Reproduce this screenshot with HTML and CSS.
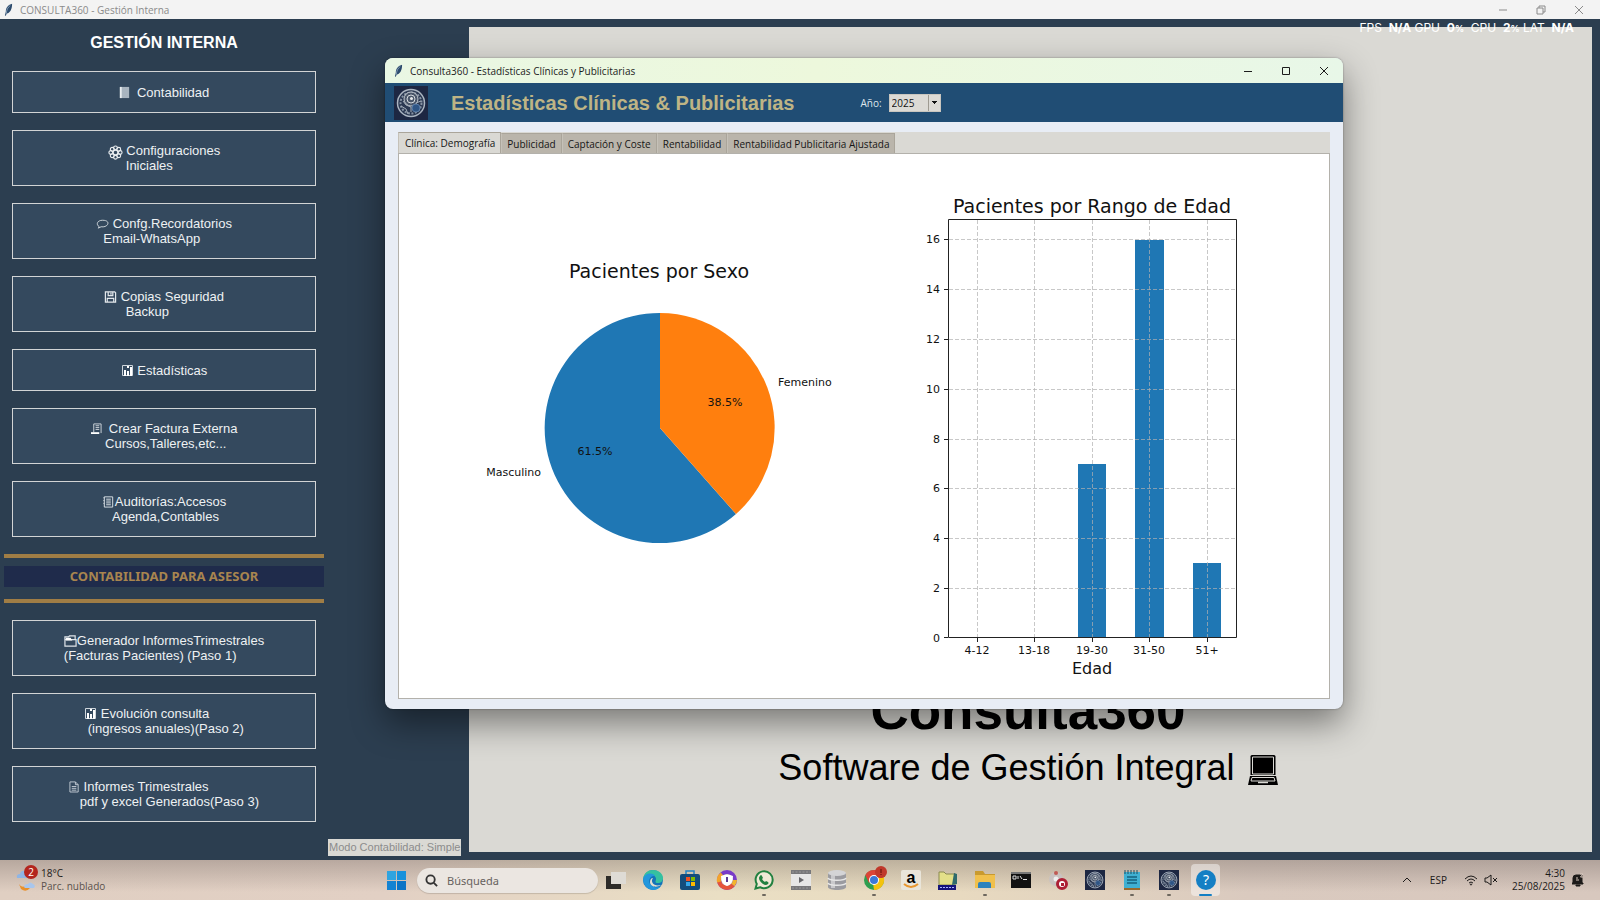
FILE: index.html
```html
<!DOCTYPE html>
<html lang="es">
<head>
<meta charset="UTF-8">
<meta name="viewport" content="width=device-width, initial-scale=1.0">
<title>CONSULTA360 - Gestión Interna</title>
<link rel="stylesheet" href="styles.css">
</head>
<body>

<!-- Iconos compartidos -->
<svg class="defs" aria-hidden="true">
    <symbol id="feather" viewBox="0 0 10 14">
        <path d="M9 0C5 1 2 4 2 9l-1 4 1 .5L3 11c4-1 6-5 6-11z" fill="#2b4a6d"/>
        <path d="M7 2C4 4 3 7 2.500 11" stroke="#9fb6cc" stroke-width=".8" fill="none"/>
    </symbol>
    <symbol id="brand" viewBox="0 0 34 34">
        <rect width="34" height="34" fill="#1d2742"/>
        <circle cx="17" cy="17" r="13.500" fill="#2b3852" stroke="#aab4c0" stroke-width="1.500"/>
        <circle cx="17" cy="17" r="10.500" fill="none" stroke="#8793a3" stroke-width="2" stroke-dasharray="2 1.500"/>
        <circle cx="17" cy="13" r="7" fill="#4a566a" stroke="#c3c9d0"/>
        <circle cx="17" cy="13" r="4" fill="none" stroke="#d5d9dd"/>
        <circle cx="17.500" cy="12.500" r="1.500" fill="#e5e7ea"/>
        <circle cx="22" cy="22" r="4" fill="#2f5585" stroke="#587ba6"/>
        <path d="M7 20l5 3 2 5M9 15l3 4 5 2v5M22 17l5-2" stroke="#a3adb9" fill="none"/>
    </symbol>
    <symbol id="chart" viewBox="0 0 13 13">
        <path d="M1.500 1.500h10v10h-10z" fill="none" stroke="#cfd6dc"/>
        <path d="M3 6h2v6H3zM6 7h2v5H6zM9 3h2v9H9zM6 2h2v2H6z" fill="#fff"/>
    </symbol>
</svg>

<header class="titlebar">
    <svg class="feather"><use href="#feather"/></svg>
    <span>CONSULTA360 - Gestión Interna</span>
    <div class="win-controls">
        <button aria-label="Minimizar"><svg viewBox="0 0 10 10"><path d="M1 5h8"/></svg></button>
        <button aria-label="Restaurar"><svg viewBox="0 0 10 10"><path d="M1 3h6v6H1zM3 3V1h6v6H7"/></svg></button>
        <button aria-label="Cerrar"><svg viewBox="0 0 10 10"><path d="M1 1l8 8M9 1L1 9"/></svg></button>
    </div>
</header>

<main class="desktop">
    <nav class="sidebar">
        <h1>GESTIÓN INTERNA</h1>
        <button class="menu-btn"><span><svg viewBox="0 0 10 14" class="narrow"><path d="M0 1h10v12H0z" fill="#a9b5c0"/><path d="M0 1h2v12H0z" fill="#e8ecef"/></svg>  Contabilidad</span></button>
        <button class="menu-btn"><span><svg viewBox="0 0 16 16" class="wide"><g fill="none" stroke="#e8ecef" stroke-width="1.200"><circle cx="8" cy="8" r="2.500"/><circle cx="8" cy="3" r="2"/><circle cx="8" cy="13" r="2"/><circle cx="3" cy="8" r="2"/><circle cx="13" cy="8" r="2"/><circle cx="4.500" cy="4.500" r="2"/><circle cx="11.500" cy="4.500" r="2"/><circle cx="4.500" cy="11.500" r="2"/><circle cx="11.500" cy="11.500" r="2"/></g></svg> Configuraciones
     Iniciales</span></button>
        <button class="menu-btn"><span><svg viewBox="0 0 13 14"><path d="M3 10.500C-1 8 1 3.500 6.500 3.500S13 6 12 8s-4 3-7 2.500L2 12z" fill="none" stroke="#d5dbe0"/></svg> Confg.Recordatorios
  Email-WhatsApp</span></button>
        <button class="menu-btn"><span><svg viewBox="0 0 13 14"><path d="M1 2h10l1 1v10H1zM4 2v4h5V2M3 13V9h7v4M7 3v2" fill="none" stroke="#e3e8ec" stroke-width="1.300"/></svg> Copias Seguridad
      Backup</span></button>
        <button class="menu-btn"><span><svg><use href="#chart"/></svg> Estadísticas</span></button>
        <button class="menu-btn"><span><svg viewBox="0 0 12 14" class="narrow"><path d="M3 11V2h8v10M5 4h4M5 6h4M5 8h4" fill="none" stroke="#d5dbe0"/><path d="M0 11h9v2H0z" fill="#fff"/></svg>  Crear Factura Externa
    Cursos,Talleres,etc...</span></button>
        <button class="menu-btn"><span><svg viewBox="0 0 13 14"><path d="M2 2h9v11H2zM4 4.500h5M4 6.500h5M4 8.500h5M4 10.500h5M1 3h1M1 6h1M1 9h1" fill="none" stroke="#dfe5ea"/></svg>Auditorías:Accesos
   Agenda,Contables</span></button>

        <h2 class="section">CONTABILIDAD PARA ASESOR</h2>

        <button class="menu-btn"><span><svg viewBox="0 0 14 14"><path d="M1 6h12v7H1zM1 6V3h4l1-1h6v4" fill="none" stroke="#dfe5ea" stroke-width="1.300"/><path d="M2 4h5l2 3H2z" fill="#fff"/></svg>Generador InformesTrimestrales
(Facturas Pacientes) (Paso 1)</span></button>
        <button class="menu-btn"><span><svg><use href="#chart"/></svg> Evolución consulta
 (ingresos anuales)(Paso 2)</span></button>
        <button class="menu-btn"><span><svg viewBox="0 0 12 14" class="narrow"><path d="M1 2h6l3 3v8H1zM7 2v3h3M3 7h5M3 9h5M3 11h5" fill="none" stroke="#c5cdd5"/></svg> Informes Trimestrales
   pdf y excel Generados(Paso 3)</span></button>
    </nav>

    <p class="mode">Modo Contabilidad: Simple</p>

    <section class="welcome">
        <p class="brand-name">Consulta360</p>
        <p class="slogan">Software de Gestión Integral
            <svg viewBox="0 0 30 32" aria-hidden="true"><path d="M4 1h22q1.500 0 1.500 1.500V21H2.500V2.500Q2.500 1 4 1z"/><path d="M4.500 3h21v17h-21z" fill="none" stroke="#dad9d4"/><path d="M2 22h26l2 9H0z"/><path d="M4 23.500h22l1 3.500H3z" fill="none" stroke="#dad9d4"/><path d="M10 28.500h10" stroke="#dad9d4" stroke-width="1.500"/></svg>
        </p>
    </section>

    <p class="perf">FPS&nbsp; <b>N/A</b> GPU&nbsp; <b>0<small>%</small></b>&nbsp; CPU&nbsp; <b>2<small>%</small></b> LAT&nbsp; <b>N/A</b></p>

    <section class="dialog">
        <header class="dialog-title">
            <svg class="feather"><use href="#feather"/></svg>
            <span>Consulta360 - Estadísticas Clínicas y Publicitarias</span>
            <div class="win-controls">
                <button aria-label="Minimizar"><svg viewBox="0 0 10 10"><path d="M1 5.500h8"/></svg></button>
                <button aria-label="Maximizar"><svg viewBox="0 0 10 10"><path d="M1.500 1.500h7v7h-7z"/></svg></button>
                <button aria-label="Cerrar"><svg viewBox="0 0 10 10"><path d="M1 1l8 8M9 1L1 9"/></svg></button>
            </div>
        </header>
        <div class="dialog-head">
            <svg class="logo"><use href="#brand"/></svg>
            <h2>Estadísticas Clínicas &amp; Publicitarias</h2>
            <label for="year">Año:</label>
            <span class="combo"><select id="year"><option>2025</option></select></span>
        </div>
        <div class="dialog-body">
            <div class="tabs" role="tablist">
                <button role="tab" class="active" aria-selected="true">Clínica: Demografía</button>
                <button role="tab">Publicidad</button>
                <button role="tab">Captación y Coste</button>
                <button role="tab">Rentabilidad</button>
                <button role="tab">Rentabilidad Publicitaria Ajustada</button>
            </div>
            <div class="figure">
                <svg viewBox="0 0 930 544" role="img" aria-label="Pacientes por sexo y por rango de edad">
                    <!-- Sexo -->
                    <text class="chart-title" x="260" y="124">Pacientes por Sexo</text>
                    <path d="M261 274V159A115 115 0 1 0 337 360z" fill="#1f77b4"/>
                    <path d="M261 274V159A115 115 0 0 1 337 360z" fill="#ff7f0e"/>
                    <text x="326" y="252">38.5%</text>
                    <text x="196" y="301">61.5%</text>
                    <text class="start" x="379" y="232">Femenino</text>
                    <text class="end" x="142" y="322">Masculino</text>

                    <!-- Edad -->
                    <text class="chart-title" x="693" y="59">Pacientes por Rango de Edad</text>
                    <g fill="#1f77b4">
                        <rect x="679" y="310" width="28" height="174"/>
                        <rect x="736" y="86" width="29" height="398"/>
                        <rect x="794" y="409" width="28" height="75"/>
                    </g>
                    <path class="grid" d="M578.500 484V66M635.500 484V66M693.500 484V66M750.500 484V66M808.500 484V66"/>
                    <path class="grid" d="M550 434.500h288M550 384.500h288M550 334.500h288M550 285.500h288M550 235.500h288M550 185.500h288M550 135.500h288M550 85.500h288"/>
                    <path class="axis" d="M549.500 65.500h288v418h-288z"/>
                    <path class="axis" d="M578.500 484v4M635.500 484v4M693.500 484v4M750.500 484v4M808.500 484v4M549 483.500h-4M549 434.500h-4M549 384.500h-4M549 334.500h-4M549 285.500h-4M549 235.500h-4M549 185.500h-4M549 135.500h-4M549 85.500h-4"/>
                    <g class="end">
                        <text x="541" y="488">0</text>
                        <text x="541" y="438">2</text>
                        <text x="541" y="388">4</text>
                        <text x="541" y="338">6</text>
                        <text x="541" y="289">8</text>
                        <text x="541" y="239">10</text>
                        <text x="541" y="189">12</text>
                        <text x="541" y="139">14</text>
                        <text x="541" y="89">16</text>
                    </g>
                    <text x="578" y="500">4-12</text>
                    <text x="635" y="500">13-18</text>
                    <text x="693" y="500">19-30</text>
                    <text x="750" y="500">31-50</text>
                    <text x="808" y="500">51+</text>
                    <text class="axis-title" x="693" y="520">Edad</text>
                </svg>
            </div>
        </div>
    </section>
</main>

<footer class="taskbar">
    <div class="weather">
        <svg viewBox="0 0 22 26">
            <path d="M1 11q-1-4 3-4 1-4 5-3l3 7z" fill="#8fb5e4"/>
            <path d="M3 17q3 5 8 1l3 3q-4 5-9 1z" fill="#e8912c"/>
            <path d="M8 20q0-3 4-3 2-3 5 0 3 1 1 4H9z" fill="#a9c6ec"/>
            <circle cx="15" cy="5" r="7" fill="#b3261e"/>
            <text x="15" y="9">2</text>
        </svg>
        <div>
            <p>18°C</p>
            <p class="muted">Parc. nublado</p>
        </div>
    </div>

    <div class="center">
        <button class="app" aria-label="Inicio"><svg viewBox="0 0 20 20"><path d="M0 0h9.500v9.500H0z" fill="#2fa4e0"/><path d="M10.500 0H20v9.500h-9.500z" fill="#1791dc"/><path d="M0 10.500h9.500V20H0z" fill="#1583d2"/><path d="M10.500 10.500H20V20h-9.500z" fill="#0b74c6"/></svg></button>
        <label class="search">
            <svg viewBox="0 0 14 14"><circle cx="6" cy="6" r="4.500"/><path d="M9.500 9.500L13 13"/></svg>
            <input type="text" placeholder="Búsqueda" aria-label="Búsqueda">
        </label>
        <div class="apps">
            <button class="app" aria-label="Vista de tareas"><svg viewBox="0 0 20 20"><path d="M0 6h15v13H0z" fill="#2d2b28"/><path d="M5 2h15v12H5z" fill="#dedbd5"/></svg></button>
            <button class="app" aria-label="Edge"><svg viewBox="0 0 20 20"><circle cx="10" cy="10" r="10" fill="#1473b8"/><path d="M0 9C1 3 5 0 10 0c6 0 10 4 10 8 0 3-2 5-5 5-4 0-2-2-2-4 0-5-10-6-13 0z" fill="#35c1a0"/><path d="M0 9C2 3 9 2 12 6 7 5 4 11 8 15c3 3 7 3 10 1-5 7-17 5-18-7z" fill="#2397dc"/><path d="M10 8c-3 4 1 9 8 7-4 3-11 2-11-3 0-2 1-4 3-4z" fill="#e3ded0"/></svg></button>
            <button class="app" aria-label="Tienda"><svg viewBox="0 0 20 20"><path d="M6 5V1h8v4" fill="none" stroke="#2384c6" stroke-width="1.500"/><rect y="4" width="20" height="16" rx="2" fill="#134d7c"/><path d="M6 7h4v4H6z" fill="#f25022"/><path d="M11 7h4v4h-4z" fill="#7fba00"/><path d="M6 12h4v4H6z" fill="#35a6e8"/><path d="M11 12h4v4h-4z" fill="#ffb900"/></svg></button>
            <button class="app" aria-label="Navegador seguro"><svg viewBox="0 0 20 20"><circle cx="10" cy="10" r="8" fill="none" stroke="#7a3bc8" stroke-width="4"/><path d="M2 10a8 8 0 0 0 14 5" fill="none" stroke="#e6543a" stroke-width="4"/><path d="M2 12a8 8 0 0 1 3-8" fill="none" stroke="#f3a32c" stroke-width="4"/><path d="M16 15a8 8 0 0 0 2-5" fill="none" stroke="#f3b52c" stroke-width="4"/><path d="M4 6q6-3 12 0 0 8-6 10-6-2-6-10z" fill="#fff"/><path d="M9 7h2v5H9z" fill="#5b3a94"/></svg></button>
            <button class="app running" aria-label="WhatsApp"><svg viewBox="0 0 20 20"><path d="M1.500 18.500l1.300-4.500a8.500 8.500 0 1 1 3.300 3.200z" fill="#efe9d6" stroke="#21803f" stroke-width="2"/><path d="M6 6q1-2 2 0l1 2-1 1q1 2 3 3l1-1 2 1q1 1 0 2-2 2-5 0-4-3-4-6 0-1 1-2z" fill="#21803f"/></svg></button>
            <button class="app" aria-label="Vídeo"><svg viewBox="0 0 20 20"><path d="M0 0h20v20H0z" fill="#77777a"/><path d="M0 4h20v12H0z" fill="#e6e6e6"/><path d="M8 7l5 3-5 3z" fill="#66666a"/><path d="M1 2h18M1 18h18" stroke="#999" stroke-dasharray="2 1.500"/></svg></button>
            <button class="app" aria-label="Base de datos"><svg viewBox="0 0 20 20"><path d="M1 3v14c0 4 18 4 18 0V3z" fill="#9b9ba0"/><path d="M4 4v14h4V4z" fill="#c9c9cc"/><ellipse cx="10" cy="3" rx="9" ry="3" fill="#d4d4d6"/><path d="M1 8c1 3 17 3 18 0M1 13c1 3 17 3 18 0" fill="none" stroke="#e8e8e8" stroke-width="1.500"/></svg></button>
            <button class="app running" aria-label="Chrome"><svg viewBox="0 0 20 20"><circle cx="10" cy="10" r="10" fill="#2e9e4f"/><path d="M1.300 5A10 10 0 0 1 18.700 5L10 10z" fill="#db4437"/><path d="M18.700 5A10 10 0 0 1 10 20l-1-7 1-7z" fill="#f4c20d"/><path d="M1.300 5h17.400v3H10l-5 5z" fill="#db4437"/><circle cx="10" cy="10" r="5" fill="#fff"/><circle cx="10" cy="10" r="4" fill="#3b78d8"/><circle cx="17" cy="2" r="6" fill="#c0392b"/><path d="M17-1v4M17 4v1" stroke="#7c1e16" stroke-width="1.500"/></svg></button>
            <button class="app" aria-label="Amazon"><svg viewBox="0 0 20 20"><rect width="20" height="20" rx="2" fill="#e9e5da"/><text class="amazon" x="10" y="13">a</text><path d="M3 14q7 6 14 0" fill="none" stroke="#e8962e" stroke-width="2"/></svg></button>
            <button class="app" aria-label="Cliente FTP"><svg viewBox="0 0 20 20"><path d="M1 2h5l2 2h9v11H1z" fill="#e3e089" stroke="#8a8a50"/><path d="M16 3l3 1v10l-5 1z" fill="#2f6b6d"/><path d="M0 15h18v5H0z" fill="#15157a"/><path d="M2 17.500h14" stroke="#aab6ff" stroke-dasharray="2 1"/></svg></button>
            <button class="app running" aria-label="Explorador"><svg viewBox="0 0 20 20"><path d="M0 1h8l2 3h10v14H0z" fill="#c99a2e"/><path d="M0 5h20v13H0z" fill="#f0c04c"/><path d="M3 18v-4q0-2 2-2h9q2 0 2 2v4z" fill="#2c82be"/></svg></button>
            <button class="app" aria-label="Símbolo del sistema"><svg viewBox="0 0 20 20"><path d="M0 2h20v16H0z" fill="#111"/><path d="M0 2h20v2H0z" fill="#777"/><path d="M2 6h3v3H2zM7 6v3M9 6l2 3M12 9.500h4" fill="none" stroke="#ddd"/></svg></button>
            <button class="app" aria-label="Grabador"><svg viewBox="0 0 20 20"><circle cx="8" cy="9" r="7" fill="#c9c2c0"/><circle cx="8" cy="9" r="2.500" fill="#eee"/><circle cx="8" cy="3" r="2" fill="#c05a54"/><circle cx="14" cy="14" r="4.500" fill="#fff" stroke="#ad1f35" stroke-width="3"/><path d="M13 13h3v3h-3z" fill="#ad1f35"/></svg></button>
            <button class="app" aria-label="Consulta360"><svg><use href="#brand"/></svg></button>
            <button class="app running" aria-label="Bloc de notas"><svg viewBox="0 0 20 20"><path d="M2 2h16v17H2z" fill="#3fb0d2"/><path d="M2 18h16v2H2z" fill="#99692c"/><path d="M3 0v4M6 0v4M9 0v4M12 0v4M15 0v4" stroke="#1d4f63"/><path d="M5 7h10M5 10h10M5 13h10" stroke="#14617f" stroke-width="1.500"/></svg></button>
            <button class="app running" aria-label="Consulta360"><svg><use href="#brand"/></svg></button>
            <button class="app running current" aria-label="Ayuda"><svg viewBox="0 0 20 20"><circle cx="10" cy="10" r="10" fill="#147fc4"/><text class="help" x="10" y="15">?</text></svg></button>
        </div>
    </div>

    <div class="tray">
        <svg viewBox="0 0 10 10"><path d="M1 7l4-4 4 4"/></svg>
        <span class="lang">ESP</span>
        <svg viewBox="0 0 14 12" class="wifi"><path d="M1 5q6-6 12 0M3 7q4-4 8 0M5 9q2-2 4 0"/><circle cx="7" cy="10.500" r=".6"/></svg>
        <svg viewBox="0 0 14 12" class="wifi"><path d="M1 4h2l4-3v10L3 8H1zM9 4l4 4M13 4L9 8"/></svg>
        <div class="clock">
            <p>4:30</p>
            <p>25/08/2025</p>
        </div>
        <svg viewBox="0 0 12 14" class="bell"><path d="M1 10V5q0-3 3-3h6v8h1v1H0v-1zM4 12h4v1H4z" fill="#1c1a19"/><path d="M8 1h3L8.500 4H11M4 5h2M4 7h3"/></svg>
    </div>
</footer>

</body>
</html>
```

FILE: styles.css
```css
* {
    box-sizing: border-box;
}
body {
    font-family: 'Open Sans', 'Noto Sans', sans-serif;
    font-size: 10px;
    margin: 0;
    min-height: 100vh;
    display: flex;
    flex-direction: column;
    background-color: #2c3e50;
}
h1, h2, p {
    margin: 0;
}
button {
    border: none;
    padding: 0;
    background: none;
    font-family: inherit;
    cursor: pointer;
}
.defs {
    position: absolute;
    width: 0;
    height: 0;
}

/* Barra de título */
.titlebar {
    display: flex;
    align-items: center;
    gap: 7px;
    height: 19px;
    padding: 0 2px 0 4px;
    background-color: #f3f3f3;
    color: #8a8a8a;
}
.feather {
    width: 9px;
    height: 14px;
}
.win-controls {
    display: flex;
    margin-left: auto;
}
.win-controls button {
    display: flex;
    justify-content: center;
    width: 38px;
    color: inherit;
}
.win-controls svg {
    width: 10px;
    height: 10px;
    fill: none;
    stroke: currentColor;
}

/* Escritorio */
.desktop {
    position: relative;
    flex: 1;
    display: grid;
    grid-template-columns: 328px 134px 1fr;
    padding: 8px 8px 8px 0;
}
.sidebar {
    display: flex;
    flex-direction: column;
    gap: 17px;
    padding: 0 12px;
}
.sidebar h1 {
    font: bold 16px/20px 'Liberation Sans', sans-serif;
    color: #fff;
    text-align: center;
    padding: 6px 0 1px;
}
.menu-btn {
    width: 304px;
    min-height: 42px;
    padding: 12px 0;
    border: 1px solid #d2d4d5;
    background-color: #34495e;
    color: #eef1f3;
    font: 13px/15px 'Liberation Sans', sans-serif;
}
.menu-btn span {
    display: inline-block;
    white-space: pre;
    text-align: left;
    vertical-align: top;
}
.menu-btn svg {
    width: 13px;
    height: 13px;
    vertical-align: -2px;
}
.menu-btn .narrow {
    width: 11px;
}
.menu-btn .wide {
    width: 15px;
    height: 15px;
    margin: -2px 0;
    vertical-align: -3px;
}
.section {
    margin: 0 -8px;
    width: 320px;
    padding: 8px 0 12px;
    border-top: 4px solid #a07d45;
    border-bottom: 4px solid #a07d45;
    background-color: #1f2b4b;
    background-clip: content-box;
    color: #a8854f;
    font-family: 'Noto Sans', sans-serif;
    font-size: 13px;
    line-height: 21px;
    text-align: center;
}
.mode {
    align-self: end;
    justify-self: start;
    margin-bottom: -4px;
    padding: 1px;
    background-color: #dad9d4;
    color: #8c8c8c;
    font: 11px/15px 'Liberation Sans', sans-serif;
    white-space: nowrap;
}
.welcome {
    display: flex;
    flex-direction: column;
    justify-content: flex-end;
    margin-left: 7px;
    padding: 0 5px 61px 0;
    background-color: #dad9d4;
    color: #000;
    font-family: 'Liberation Sans', sans-serif;
    text-align: center;
}
.brand-name {
    margin-bottom: 4px;
    font-size: 53px;
    font-weight: bold;
    line-height: 60px;
}
.slogan {
    font-size: 36px;
    line-height: 46px;
}
.slogan svg {
    width: 30px;
    height: 32px;
    vertical-align: -6px;
    margin-left: 3px;
}
.perf {
    position: absolute;
    top: 2px;
    right: 26px;
    color: #fff;
    font: 12px/14px 'Inter', sans-serif;
}
.perf small {
    font-size: 9px;
}

/* Ventana de estadísticas */
.dialog {
    position: absolute;
    top: 39px;
    left: 385px;
    right: 257px;
    border-radius: 8px;
    overflow: hidden;
    background-color: #e8edf5;
    box-shadow: 0 0 2px rgba(0, 0, 0, 0.4), 0 14px 34px rgba(0, 0, 0, 0.45);
}
.dialog-title {
    display: flex;
    align-items: center;
    gap: 7px;
    height: 25px;
    padding-left: 9px;
    background: linear-gradient(90deg, #e9f7e4, #edf8dc 45%, #e8f7e8);
    color: #1c1c1c;
}
.dialog-head {
    display: flex;
    align-items: center;
    height: 39px;
    padding-left: 9px;
    background-color: #204d74;
    color: #dfe6ec;
}
.logo {
    width: 34px;
    height: 34px;
}
.dialog-head h2 {
    margin: 0 66px 0 23px;
    color: #beb485;
    font: bold 20px/24px 'Liberation Sans', sans-serif;
}
.dialog-head label {
    margin-right: 7px;
}
.combo {
    position: relative;
    display: flex;
}
.combo select {
    appearance: none;
    width: 52px;
    height: 18px;
    padding: 0 2px;
    border: 1px solid #c9c6bf;
    border-radius: 0;
    background-color: #dcdad5;
    color: #111;
    font: 10px 'Open Sans', sans-serif;
}
.combo::after {
    content: '';
    position: absolute;
    top: 1px;
    right: 1px;
    width: 11px;
    height: 16px;
    border-left: 1px solid #9e9a91;
    background: conic-gradient(from -45deg at 50% 75%, #111 90deg, transparent 0) center / 7px 4px no-repeat;
    pointer-events: none;
}
.dialog-body {
    padding: 10px 13px;
}
.tabs {
    display: flex;
    align-items: flex-end;
    height: 21px;
    background-color: #dad9d4;
}
.tabs button {
    height: 20px;
    padding: 0 5px;
    border: 1px solid #aaa59a;
    border-left-color: #c5c1b8;
    border-bottom: none;
    background-color: #bab5ab;
    color: #161616;
    font-size: 10px;
    line-height: 18px;
    white-space: nowrap;
}
.tabs .active {
    height: 21px;
    padding: 0 5px 0 6px;
    background-color: #dad9d4;
}
.figure {
    border: 1px solid #b3b1ab;
    background-color: #fff;
}
.figure svg {
    display: block;
    width: 100%;
}
.figure text {
    font-family: 'DejaVu Sans', sans-serif;
    font-size: 11px;
    fill: #111;
    text-anchor: middle;
}
.figure .start {
    text-anchor: start;
}
.figure .end, .figure .end text {
    text-anchor: end;
}
.figure .chart-title {
    font-size: 19px;
}
.figure .axis-title {
    font-size: 16px;
}
.grid {
    stroke: #b0b0b0;
    stroke-opacity: 0.7;
    stroke-dasharray: 4 2;
}
.axis {
    fill: none;
    stroke: #222;
}

/* Barra de tareas */
.taskbar {
    display: grid;
    grid-template-columns: 1fr 53% 1fr;
    align-items: center;
    height: 40px;
    background:
        linear-gradient(rgba(60, 50, 50, 0.25), rgba(60, 50, 50, 0) 80%),
        linear-gradient(90deg, #e0cfc2, #e2d0c4 24%, #eadfc4 45%, #e8dac0 60%, #dacabf 78%, #d8c8be);
    color: #1c1a19;
}
.weather {
    display: flex;
    align-items: center;
    gap: 3px;
    padding-left: 16px;
    line-height: 13px;
}
.weather svg {
    width: 22px;
    height: 26px;
    overflow: visible;
}
.weather text {
    fill: #fff;
    font-size: 10px;
    text-anchor: middle;
}
.muted {
    color: #5a524d;
}
.center {
    display: flex;
    align-items: center;
}
.center > .app {
    width: 41px;
}
.search {
    display: flex;
    align-items: center;
    gap: 7px;
    width: 181px;
    height: 25px;
    padding: 0 8px;
    border-radius: 13px;
    background-color: #ebe6e1;
    box-shadow: 0 1px 1px rgba(0, 0, 0, 0.15);
}
.search svg {
    width: 13px;
    height: 13px;
    flex: none;
    fill: none;
    stroke: #333;
    stroke-width: 2;
}
.search input {
    width: 100%;
    border: none;
    outline: none;
    background: none;
    font: 11px 'Noto Sans', sans-serif;
}
.search input::placeholder {
    color: #67625e;
}
.apps {
    flex: 1;
    display: grid;
    grid-template-columns: repeat(17, 1fr);
}
.app {
    position: relative;
    display: flex;
    align-items: center;
    justify-content: center;
    height: 32px;
}
.app svg {
    width: 20px;
    height: 20px;
    overflow: visible;
}
.center > .app svg {
    width: 19px;
    height: 19px;
}
.running::after {
    content: '';
    position: absolute;
    bottom: 0;
    width: 4px;
    height: 2px;
    border-radius: 1px;
    background-color: #6d675e;
}
.current {
    margin: 0 4px;
    border-radius: 4px;
    background-color: rgba(255, 255, 255, 0.45);
}
.current::after {
    width: 13px;
    background-color: #147fc4;
}
.amazon {
    font: bold 16px 'Liberation Sans', sans-serif;
    text-anchor: middle;
}
.help {
    fill: #fff;
    font: 14px 'Noto Sans', sans-serif;
    text-anchor: middle;
}
.tray {
    display: flex;
    align-items: center;
    justify-content: flex-end;
    padding-right: 16px;
}
.tray svg {
    width: 10px;
    height: 10px;
    fill: none;
    stroke: #1c1a19;
}
.tray .lang {
    margin: 0 17px 0 18px;
}
.tray .wifi {
    width: 14px;
    height: 12px;
    margin-right: 6px;
}
.tray .bell {
    width: 12px;
    height: 14px;
}
.bell path + path {
    stroke: #d8c8be;
}
.clock {
    margin: 0 7px 0 8px;
    line-height: 13px;
    text-align: right;
}
```
